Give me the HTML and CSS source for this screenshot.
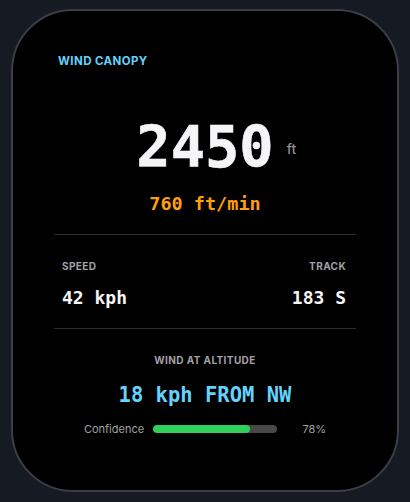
FILE: index.html
```html
<!DOCTYPE html>
<html>
<head>
<meta charset="utf-8">
<link rel="stylesheet" href="styles.css">
</head>
<body>
<div class="card">
  <div class="title">WIND CANOPY</div>
  <div class="altitude">
    <div class="alt-wrap">
      <span class="alt-value">2450</span>
      <span class="alt-unit">ft</span>
    </div>
  </div>
  <div class="rate">760 ft/min</div>
  <div class="divider"></div>
  <div class="stats">
    <div class="stat">
      <div class="label">SPEED</div>
      <div class="value">42 kph</div>
    </div>
    <div class="stat right">
      <div class="label">TRACK</div>
      <div class="value">183 S</div>
    </div>
  </div>
  <div class="divider"></div>
  <div class="wind">
    <div class="label">WIND AT ALTITUDE</div>
    <div class="wind-value">18 kph FROM NW</div>
    <div class="conf">
      <span class="conf-label">Confidence</span>
      <div class="bar"><div class="fill" style="width:78%"></div></div>
      <span class="conf-pct">78%</span>
    </div>
  </div>
</div>
</body>
</html>
```

FILE: styles.css
```css
html, body {
  margin: 0;
  padding: 0;
  background: #161a22;
  width: 410px;
  height: 502px;
  overflow: hidden;
}
body {
  font-family: Inter, "Liberation Sans", sans-serif;
}
.card {
  box-sizing: border-box;
  margin: 9px 0 0 11px;
  width: 388px;
  height: 483px;
  background: #000;
  border: 2px solid #3a3e47;
  border-radius: 62px;
  padding: 43px 41px 0;
}
.title {
  padding-left: 4px;
  font-size: 11.5px;
  line-height: 14px;
  font-weight: 700;
  letter-spacing: 0.4px;
  color: #64d2ff;
}
.altitude {
  margin-top: 50px;
  display: flex;
  justify-content: center;
}
.alt-wrap {
  position: relative;
}
.alt-value {
  font-family: "DejaVu Sans Mono", monospace;
  font-size: 57px;
  line-height: 58px;
  font-weight: 700;
  color: #f5f5f7;
  display: block;
  -webkit-text-stroke: 0.6px #f5f5f7;
}
.alt-unit {
  position: absolute;
  left: 100%;
  top: 23px;
  margin-left: 13px;
  font-size: 14px;
  line-height: 16px;
  color: #8e8e93;
  font-weight: 500;
}
.rate {
  margin-top: 17px;
  text-align: center;
  font-family: "DejaVu Sans Mono", monospace;
  font-size: 18.5px;
  line-height: 22px;
  font-weight: 700;
  color: #ff9f0a;
}
.divider {
  height: 1px;
  background: #2c2c2e;
}
.rate + .divider {
  margin-top: 19px;
}
.stats {
  display: flex;
  justify-content: space-between;
  padding: 25px 10px 19px 8px;
}
.stat.right {
  text-align: right;
}
.label {
  font-size: 10px;
  line-height: 12px;
  font-weight: 700;
  letter-spacing: 0.4px;
  color: #a1a1a6;
}
.value {
  margin-top: 15px;
  font-family: "DejaVu Sans Mono", monospace;
  font-size: 18px;
  line-height: 22px;
  font-weight: 700;
  color: #f5f5f7;
}
.wind {
  padding-top: 25px;
  text-align: center;
}
.wind-value {
  margin-top: 17px;
  font-family: "DejaVu Sans Mono", monospace;
  font-size: 20.5px;
  line-height: 25px;
  font-weight: 700;
  color: #64d2ff;
}
.conf {
  margin-top: 14px;
  display: flex;
  justify-content: center;
  align-items: center;
  gap: 9px;
}
.conf-label, .conf-pct {
  font-size: 11px;
  line-height: 14px;
  color: #a1a1a6;
}
.conf-pct {
  width: 40px;
  text-align: right;
}
.bar {
  width: 124px;
  height: 8px;
  border-radius: 4px;
  background: #48484a;
  overflow: hidden;
}
.fill {
  height: 100%;
  border-radius: 4px;
  background: #30d158;
}
```
